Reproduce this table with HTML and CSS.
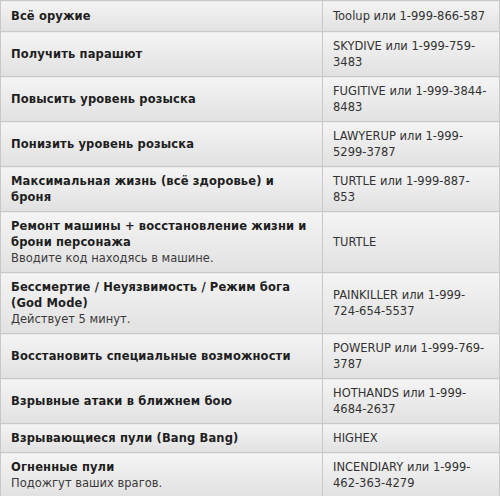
FILE: index.html
```html
<!DOCTYPE html>
<html lang="ru">
<head>
<meta charset="utf-8">
<link rel="stylesheet" href="styles.css">
</head>
<body>
<table class="cheats">
<tbody>
<tr class="first"><td class="name"><b>Всё оружие</b></td><td class="code">Toolup или 1-999-866-587</td></tr>
<tr><td class="name"><b>Получить парашют</b></td><td class="code">SKYDIVE или 1-999-759-3483</td></tr>
<tr><td class="name"><b>Повысить уровень розыска</b></td><td class="code">FUGITIVE или 1-999-3844-8483</td></tr>
<tr><td class="name"><b>Понизить уровень розыска</b></td><td class="code">LAWYERUP или 1-999-5299-3787</td></tr>
<tr><td class="name"><b>Максимальная жизнь (всё здоровье) и броня</b></td><td class="code">TURTLE или 1-999-887-853</td></tr>
<tr><td class="name"><b>Ремонт машины + восстановление жизни и брони персонажа</b><br><span class="note">Вводите код находясь в машине.</span></td><td class="code">TURTLE</td></tr>
<tr><td class="name"><b>Бессмертие / Неуязвимость / Режим бога (God Mode)</b><br><span class="note">Действует 5 минут.</span></td><td class="code">PAINKILLER или 1-999-724-654-5537</td></tr>
<tr><td class="name"><b>Восстановить специальные возможности</b></td><td class="code">POWERUP или 1-999-769-3787</td></tr>
<tr><td class="name"><b>Взрывные атаки в ближнем бою</b></td><td class="code">HOTHANDS или 1-999-4684-2637</td></tr>
<tr><td class="name"><b>Взрывающиеся пули (Bang Bang)</b></td><td class="code">HIGHEX</td></tr>
<tr><td class="name"><b>Огненные пули</b><br><span class="note">Подожгут ваших врагов.</span></td><td class="code">INCENDIARY или 1-999-462-363-4279</td></tr>
</tbody>
</table>
</body>
</html>
```
FILE: styles.css
```css
html, body {
  margin: 0;
  padding: 0;
  background: #ffffff;
}
.cheats {
  border-collapse: collapse;
  width: 500px;
  table-layout: fixed;
  font-family: "DejaVu Sans", Verdana, sans-serif;
  font-size: 11.5px;
  line-height: 16px;
  color: #333333;
}
.cheats td {
  border: 1px solid #c8c8c8;
  padding: 6px 9px 6px 10px;
  vertical-align: middle;
  background: linear-gradient(#f4f4f4, #e1e1e1);
}
.cheats td.name {
  width: 302px;
}
.cheats tr.first td {
  padding-top: 7px;
  padding-bottom: 7px;
}
.cheats b {
  color: #1e1e1e;
  font-weight: bold;
  letter-spacing: 0.14px;
}
.note {
  color: #3a3a3a;
}
```
